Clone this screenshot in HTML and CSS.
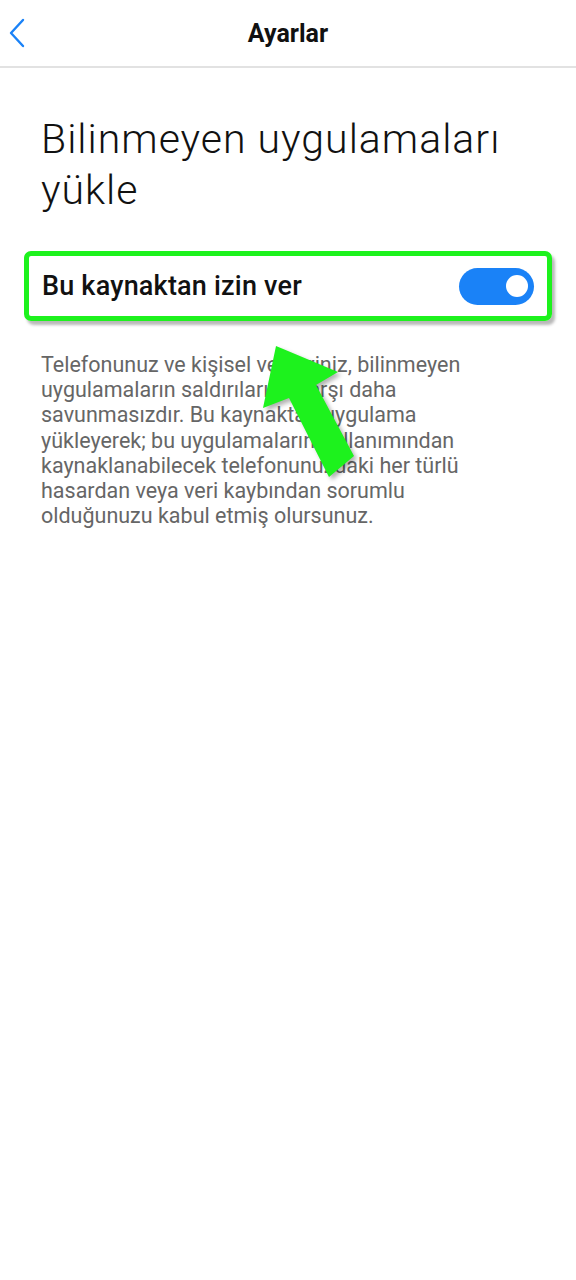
FILE: index.html
```html
<!DOCTYPE html>
<html lang="tr">
<head>
<meta charset="utf-8">
<link rel="stylesheet" href="styles.css">
</head>
<body>
<div class="screen">
  <header class="topbar">
    <svg class="back" width="20" height="30" viewBox="0 0 20 30"><path d="M14 2 L2 15 L14 28" fill="none" stroke="#1a82f7" stroke-width="2.4" stroke-linecap="round" stroke-linejoin="round"/></svg>
    <h1 class="title">Ayarlar</h1>
  </header>
  <main class="content">
    <h2 class="heading">Bilinmeyen uygulamaları yükle</h2>
    <div class="row">
      <span class="row-label">Bu kaynaktan izin ver</span>
      <span class="toggle"><span class="knob"></span></span>
    </div>
    <p class="desc">Telefonunuz ve kişisel verileriniz, bilinmeyen uygulamaların saldırılarına karşı daha savunmasızdır. Bu kaynaktan uygulama yükleyerek; bu uygulamaların kullanımından kaynaklanabilecek telefonunuzdaki her türlü hasardan veya veri kaybından sorumlu olduğunuzu kabul etmiş olursunuz.</p>
    <svg class="arrow" width="576" height="1280" viewBox="0 0 576 1280"><polygon points="276,346 338,372 316,385 354,456 329,477 289,398 263,408" fill="#1df21d"/></svg>
  </main>
</div>
</body>
</html>
```
FILE: styles.css
```css
* { box-sizing: border-box; margin: 0; padding: 0; }
html, body { background: #fff; }
body { font-family: Roboto, "Noto Sans", sans-serif; }
.screen { width: 576px; min-height: 1280px; position: relative; }
.topbar {
  height: 68px;
  border-bottom: 2px solid #e2e2e2;
  display: flex;
  align-items: center;
  justify-content: center;
  position: relative;
}
.back { position: absolute; left: 9px; top: 18px; }
.title { font-size: 25px; font-weight: 700; color: #111; margin-top: 1px; }
.content { padding: 46px 24px 0 24px; }
.heading {
  font-weight: 300;
  font-size: 41px;
  line-height: 51px;
  letter-spacing: 1px;
  color: #111;
  padding-left: 17px;
  padding-right: 20px;
}
.row {
  margin-top: 35px;
  height: 70px;
  border: 5px solid #1df21d;
  border-radius: 7px;
  box-shadow: 3px 4px 3px rgba(0,0,0,0.28);
  display: flex;
  align-items: center;
  justify-content: space-between;
  padding: 0 13px 0 13px;
}
.row-label { font-size: 27px; font-weight: 500; color: #111; letter-spacing: 0.2px; }
.toggle {
  width: 75px;
  height: 37px;
  border-radius: 19px;
  background: #1a82f7;
  display: flex;
  align-items: center;
  justify-content: flex-end;
  padding-right: 6px;
}
.knob { width: 22px; height: 22px; border-radius: 50%; background: #fff; }
.desc {
  margin-top: 31px;
  padding-left: 17px;
  width: 460px;
  font-size: 21.5px;
  line-height: 25.2px;
  color: #666;
}
.arrow {
  position: absolute;
  left: 0;
  top: 0;
  pointer-events: none;
  filter: drop-shadow(3px 3px 2px rgba(0,0,0,0.3));
}
```
